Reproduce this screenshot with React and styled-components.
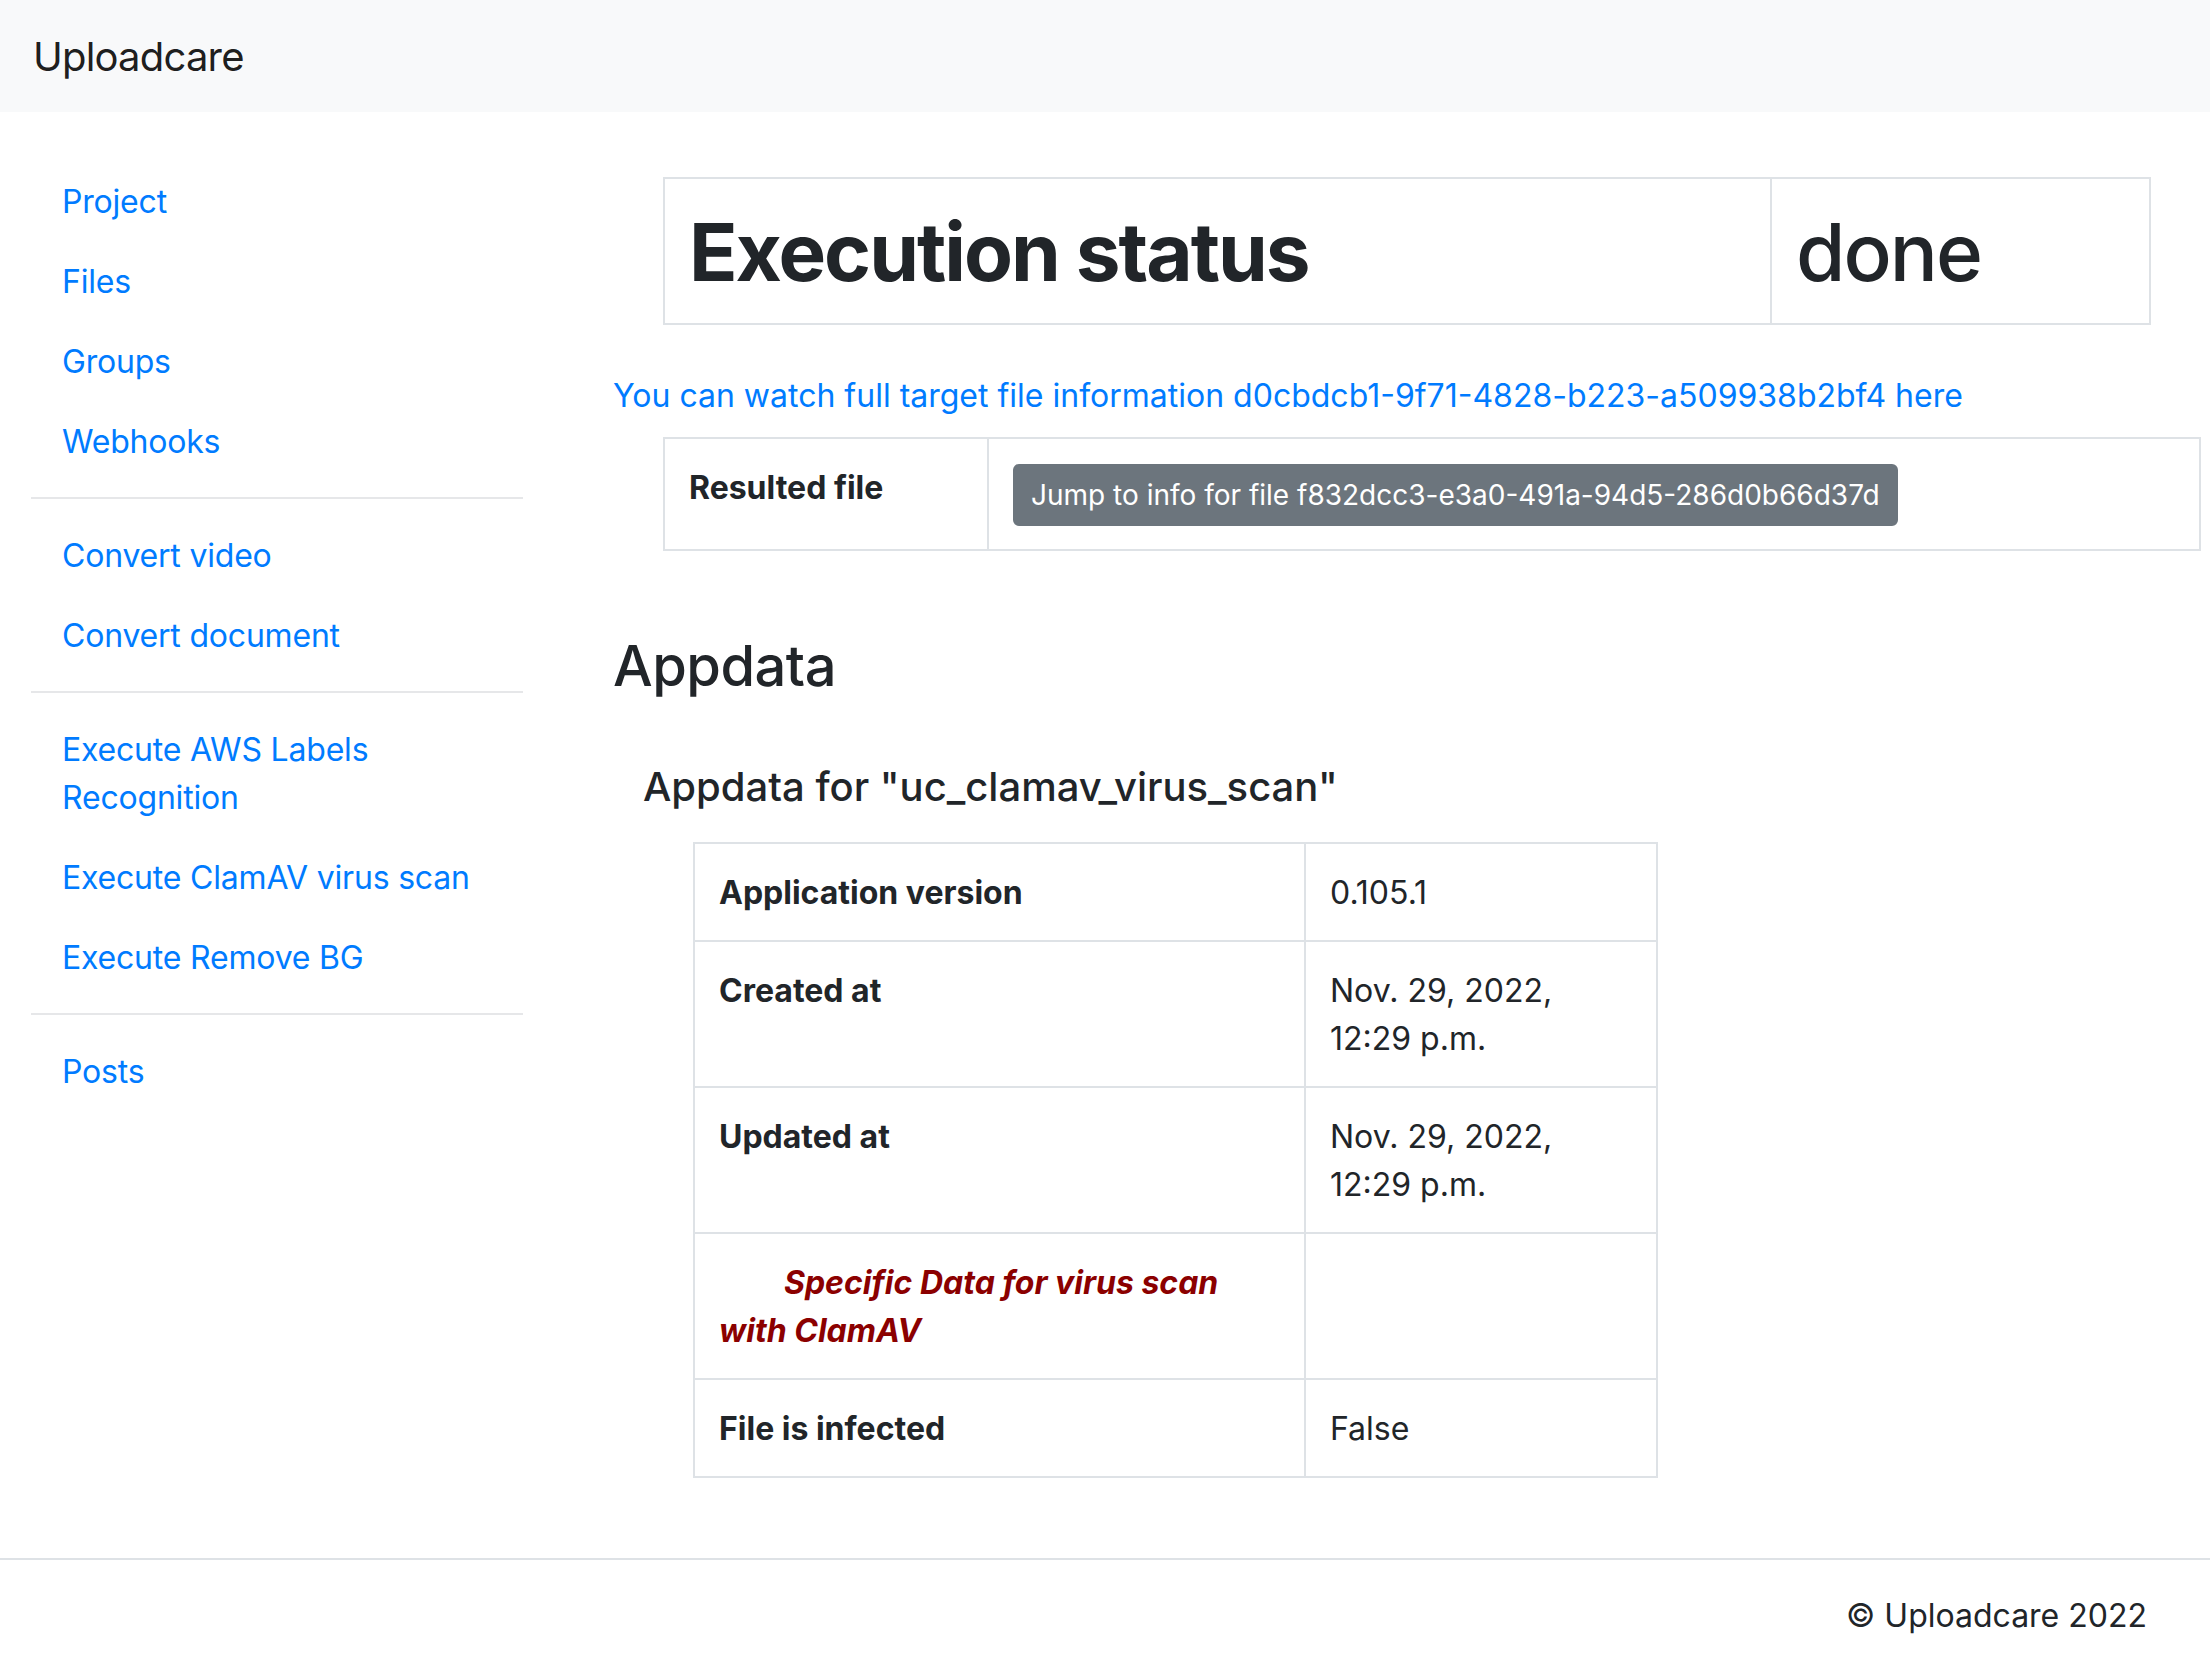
import styled, { createGlobalStyle } from "styled-components";

const GlobalStyle = createGlobalStyle`
  html, body {
    margin: 0;
    padding: 0;
    background: #fff;
  }
  body {
    font-family: Inter, "Noto Sans", "Liberation Sans", sans-serif;
    font-size: 32px;
    line-height: 48px;
    color: #212529;
  }
  * {
    box-sizing: border-box;
  }
`;

const sideLinks = [
  ["Project", "Files", "Groups", "Webhooks"],
  ["Convert video", "Convert document"],
  ["Execute AWS Labels Recognition", "Execute ClamAV virus scan", "Execute Remove BG"],
  ["Posts"],
];

const appdata = [
  { label: "Application version", value: "0.105.1" },
  { label: "Created at", value: "Nov. 29, 2022, 12:29 p.m." },
  { label: "Updated at", value: "Nov. 29, 2022, 12:29 p.m." },
  { label: "Specific Data for virus scan with ClamAV", value: "", note: true },
  { label: "File is infected", value: "False" },
];

export default function App() {
  return (
    <>
      <GlobalStyle />
      <Page>
        <Navbar>
          <Brand href="#">Uploadcare</Brand>
        </Navbar>
        <Layout>
          <Sidebar>
            {sideLinks.map((group, i) => (
              <div key={i}>
                {i > 0 && <Divider />}
                <NavList>
                  {group.map(link => (
                    <li key={link}>
                      <NavLink href="#">{link}</NavLink>
                    </li>
                  ))}
                </NavList>
              </div>
            ))}
          </Sidebar>
          <Main>
            <StatusTable>
              <colgroup>
                <col style={{ width: 1107 }} />
                <col />
              </colgroup>
              <tbody>
                <tr>
                  <StatusCell>
                    <StatusTitle bold>Execution status</StatusTitle>
                  </StatusCell>
                  <StatusCell>
                    <StatusTitle>done</StatusTitle>
                  </StatusCell>
                </tr>
              </tbody>
            </StatusTable>

            <InfoLink href="#">
              You can watch full target file information
              d0cbdcb1-9f71-4828-b223-a509938b2bf4 here
            </InfoLink>

            <ResultTable>
              <colgroup>
                <col style={{ width: 324 }} />
                <col />
              </colgroup>
              <tbody>
                <tr>
                  <Th>Resulted file</Th>
                  <Td>
                    <SecondaryButton href="#">
                      Jump to info for file f832dcc3-e3a0-491a-94d5-286d0b66d37d
                    </SecondaryButton>
                  </Td>
                </tr>
              </tbody>
            </ResultTable>

            <SectionTitle>Appdata</SectionTitle>
            <SubTitle>Appdata for "uc_clamav_virus_scan"</SubTitle>

            <DataTable>
              <colgroup>
                <col style={{ width: 611 }} />
                <col />
              </colgroup>
              <tbody>
                {appdata.map(row => (
                  <tr key={row.label}>
                    <Th>
                      {row.note ? <Note>{row.label}</Note> : row.label}
                    </Th>
                    <Td>{row.value}</Td>
                  </tr>
                ))}
              </tbody>
            </DataTable>
          </Main>
        </Layout>
        <Footer>© Uploadcare 2022</Footer>
      </Page>
    </>
  );
}

const Page = styled.div`
  display: flex;
  flex-direction: column;
  width: 2210px;
`;

const Navbar = styled.nav`
  display: flex;
  align-items: center;
  height: 112px;
  padding: 2px 33px 0;
  background: #f8f9fa;
`;

const Brand = styled.a`
  font-size: 40px;
  line-height: 60px;
  letter-spacing: -0.8px;
  color: rgba(0, 0, 0, 0.9);
  text-decoration: none;
`;

const Layout = styled.div`
  display: flex;
  align-items: flex-start;
`;

const Sidebar = styled.aside`
  flex: 0 0 492px;
  margin-left: 31px;
  padding-top: 50px;
`;

const NavList = styled.ul`
  list-style: none;
  margin: 0;
  padding: 0;
`;

const NavLink = styled.a`
  display: block;
  padding: 16px 32px 16px 31px;
  color: #007bff;
  letter-spacing: -0.2px;
  text-decoration: none;
`;

const Divider = styled.hr`
  margin: 15px 0 17px;
  border: 0;
  border-top: 2px solid #e6e7e9;
`;

const Main = styled.main`
  flex: 1;
  display: flex;
  flex-direction: column;
  align-items: flex-start;
  margin-left: 90px;
  padding-top: 65px;
  padding-bottom: 80px;
`;

const BaseTable = styled.table`
  border-collapse: collapse;
  table-layout: fixed;

  th,
  td {
    border: 2px solid #dee2e6;
    padding: 25px 24px 23px;
    vertical-align: top;
    text-align: left;
  }
`;

const StatusTable = styled(BaseTable)`
  width: 1488px;
  margin-left: 50px;
`;

const StatusCell = styled.th`
  font-weight: 400;
`;

const StatusTitle = styled.h1`
  margin: 0;
  font-size: 80px;
  line-height: 96px;
  font-weight: ${props => (props.bold ? 700 : 500)};
  letter-spacing: -2px;
`;

const InfoLink = styled.a`
  margin-top: 47px;
  color: #007bff;
  text-decoration: none;
`;

const ResultTable = styled(BaseTable)`
  width: 1538px;
  margin-left: 50px;
  margin-top: 17px;
`;

const Th = styled.th`
  font-weight: 700;
`;

const Td = styled.td`
  font-weight: 400;
`;

const SecondaryButton = styled.a`
  display: inline-block;
  padding: 8px 16px;
  font-size: 28px;
  line-height: 42px;
  color: #fff;
  background: #6c757d;
  border: 2px solid #6c757d;
  border-radius: 6px;
  text-decoration: none;
`;

const SectionTitle = styled.h3`
  margin: 82px 0 0;
  font-size: 56px;
  line-height: 67px;
  font-weight: 500;
  letter-spacing: -0.5px;
`;

const SubTitle = styled.h5`
  margin: 63px 0 0 30px;
  font-size: 40px;
  line-height: 48px;
  font-weight: 500;
`;

const DataTable = styled(BaseTable)`
  width: 965px;
  margin: 31px 0 0 80px;
`;

const Note = styled.div`
  color: #8b0000;
  font-style: italic;
  font-weight: 700;
  text-indent: 65px;
`;

const Footer = styled.footer`
  padding: 32px 63px 32px;
  border-top: 2px solid #dee2e6;
  border-bottom: 1px solid #000;
  text-align: right;
`;
